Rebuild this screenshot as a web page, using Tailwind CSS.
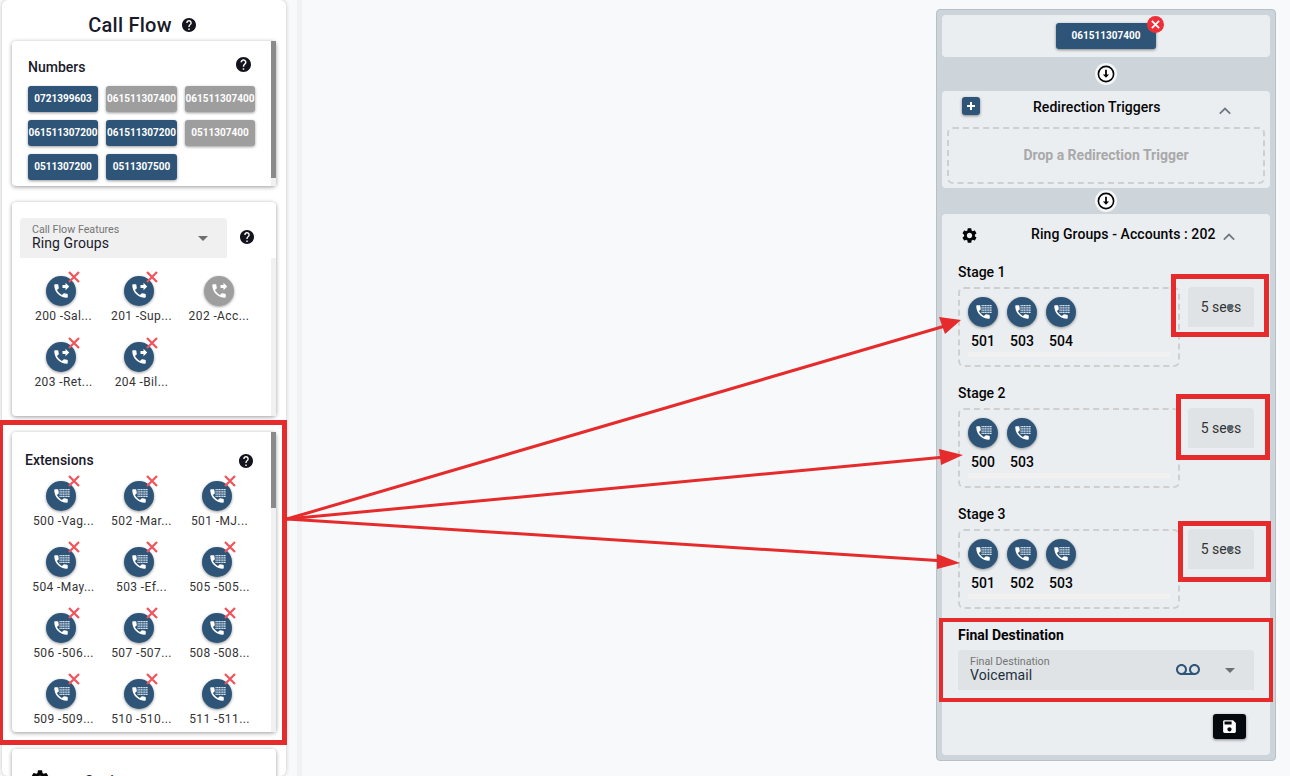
<!doctype html>
<html>
  <head>
    <title>Call Flow</title>
    <meta charset="UTF-8" />
    <script src="https://cdn.jsdelivr.net/npm/@tailwindcss/browser@4"></script>
  </head>
  <body class="bg-[#f8f9fb] font-[Roboto,sans-serif] text-[#1a1a2a]">
    <svg class="hidden">
      <symbol id="help" viewBox="2 2 20 20"><path fill="#14141e" d="M12 2C6.48 2 2 6.48 2 12s4.48 10 10 10 10-4.48 10-10S17.52 2 12 2zm1 17h-2v-2h2v2zm2.07-7.75l-.9.92C13.45 12.9 13 13.5 13 15h-2v-.5c0-1.1.45-2.1 1.17-2.83l1.24-1.26c.37-.36.59-.86.59-1.41 0-1.1-.9-2-2-2s-2 .9-2 2H8c0-2.21 1.79-4 4-4s4 1.79 4 4c0 .88-.36 1.68-.93 2.25z"/></symbol>
      <symbol id="cog" viewBox="2 2 20 20"><path fill="#050505" d="M19.14 12.94c.04-.3.06-.61.06-.94 0-.32-.02-.64-.07-.94l2.03-1.58c.18-.14.23-.41.12-.61l-1.92-3.32c-.12-.22-.37-.29-.59-.22l-2.39.96c-.5-.38-1.03-.7-1.62-.94l-.36-2.54c-.04-.24-.24-.41-.48-.41h-3.84c-.24 0-.43.17-.47.41l-.36 2.54c-.59.24-1.13.57-1.62.94l-2.39-.96c-.22-.08-.47 0-.59.22L2.74 8.87c-.12.21-.08.47.12.61l2.03 1.58c-.05.3-.09.63-.09.94s.02.64.07.94l-2.03 1.58c-.18.14-.23.41-.12.61l1.92 3.32c.12.22.37.29.59.22l2.39-.96c.5.38 1.03.7 1.62.94l.36 2.54c.05.24.24.41.48.41h3.84c.24 0 .44-.17.47-.41l.36-2.54c.59-.24 1.13-.56 1.62-.94l2.39.96c.22.08.47 0 .59-.22l1.92-3.32c.12-.22.07-.47-.12-.61l-2.01-1.58zM12 15.6c-1.98 0-3.6-1.62-3.6-3.6s1.62-3.6 3.6-3.6 3.6 1.62 3.6 3.6-1.62 3.6-3.6 3.6z"/></symbol>
      <symbol id="forward" viewBox="0 0 24 24"><path fill="#fff" d="M18 11l5-5-5-5v3h-4v4h4v3zm2 4.5c-1.25 0-2.45-.2-3.57-.57-.35-.11-.74-.03-1.02.24l-2.2 2.2c-2.83-1.44-5.15-3.75-6.59-6.59l2.2-2.21c.28-.26.36-.65.25-1C8.7 6.45 8.5 5.25 8.5 4c0-.55-.45-1-1-1H4c-.55 0-1 .45-1 1 0 9.39 7.61 17 17 17 .55 0 1-.45 1-1v-3.5c0-.55-.45-1-1-1z"/></symbol>
      <symbol id="dial" viewBox="0 0 24 24">
        <path fill="#fff" d="M20 15.5c-1.25 0-2.45-.2-3.57-.57-.35-.11-.74-.03-1.02.24l-2.2 2.2c-2.83-1.44-5.15-3.75-6.59-6.59l2.2-2.21c.28-.26.36-.65.25-1C8.7 6.45 8.5 5.25 8.5 4c0-.55-.45-1-1-1H4c-.55 0-1 .45-1 1 0 9.39 7.61 17 17 17 .55 0 1-.45 1-1v-3.5c0-.55-.45-1-1-1z"/>
        <path fill="none" stroke="#dbe6f0" stroke-width="1.9" stroke-dasharray="1.7 .5" d="M10 3.5h14M10 6.500h14M10 9.500h14M10 12.500h14"/>
      </symbol>
      <symbol id="arrow-down" viewBox="0 0 18 18"><circle cx="9" cy="9" r="7.6" fill="#fff" stroke="#050505" stroke-width="1.6"/><path fill="#050505" d="M8.1 4.8h1.8v4.6h2.2L9 12.8 5.9 9.4h2.2z"/></symbol>
      <symbol id="chevron" viewBox="0 0 12 8"><path fill="none" stroke="#6f7880" stroke-width="1.8" d="M.8 6.6 6 1.6l5.200 5"/></symbol>
    </svg>

    <div class="relative flex h-[776px] w-[1290px] overflow-hidden">
      <aside class="ml-[2px] h-full w-[284px] shrink-0 rounded-md bg-white px-[10px] shadow-[0_0_4px_rgba(0,0,0,0.2)]">
        <div class="flex h-[41px] items-center justify-center gap-[10px] pr-[4px] pt-[9px]">
          <h1 class="text-[20px] font-medium leading-none tracking-[.25px]">Call Flow</h1>
          <svg class="size-[14px]"><use href="#help" /></svg>
        </div>

        <section class="flex h-[145px] rounded-sm bg-white shadow-[0_1px_4px_rgba(0,0,0,0.4)]">
          <div class="flex-1 pl-4 pt-[15px]">
            <div class="flex items-center justify-between pr-[20px]">
              <h2 class="mt-[2px] text-sm font-medium leading-[18px]">Numbers</h2>
              <svg class="mb-[3px] size-[15px]"><use href="#help" /></svg>
            </div>
            <div id="numbers" class="mt-[10px] grid grid-cols-[70px_71px_70px] gap-x-2 gap-y-[8px]"></div>
          </div>
          <div class="w-[5px] bg-[#f1f1f1]"><div class="h-[137px] bg-[#8a8a8a]"></div></div>
        </section>

        <section class="mt-4 flex h-[214px] flex-col rounded-sm bg-white shadow-[0_1px_4px_rgba(0,0,0,0.4)]">
          <div class="flex pl-2 pt-4">
            <div class="flex h-10 w-[207px] items-center justify-between rounded-t bg-[#f0f0f0] pl-3 pr-[19px]">
              <div class="pt-[2px] leading-none">
                <div class="text-[10.7px] text-[#757575]">Call Flow Features</div>
                <div class="-mt-[2px] text-sm tracking-[.1px]">Ring Groups</div>
              </div>
              <div class="border-x-[5px] border-t-[5px] border-x-transparent border-t-[#6f6f6f]"></div>
            </div>
            <svg class="ml-[13px] mt-[12px] size-[14px]"><use href="#help" /></svg>
          </div>
          <div class="flex flex-1">
            <div id="features" class="grid flex-1 grid-cols-[78px_78px_82px] content-start gap-y-[17px] pl-[10px] pt-[18px]"></div>
            <div class="w-[5px] bg-[#f1f1f1]"></div>
          </div>
        </section>

        <section class="mt-4 flex h-[300px] rounded-sm bg-white shadow-[0_1px_4px_rgba(0,0,0,0.4)]">
          <div class="flex-1">
            <div class="flex items-center justify-between pl-[13px] pr-[18px] pt-[19px]">
              <h2 class="text-sm font-medium leading-[18px]">Extensions</h2>
              <svg class="mt-[2px] size-[14px]"><use href="#help" /></svg>
            </div>
            <div id="extensions" class="grid grid-cols-[78px_78px_78px] gap-y-[17px] pl-[10px] pt-[12px]"></div>
          </div>
          <div class="w-[5px] bg-[#f1f1f1]"><div class="h-[76px] bg-[#8a8a8a]"></div></div>
        </section>

        <section class="mt-[17px] flex h-[60px] items-start gap-9 rounded-sm bg-white pl-[19px] pt-[21px] shadow-[0_1px_4px_rgba(0,0,0,0.4)]">
          <svg class="size-[18px]"><use href="#cog" /></svg>
          <span class="mt-[1px] text-sm font-medium">Settings</span>
        </section>
      </aside>

      <div class="ml-[11px] h-full w-[5px] shrink-0 bg-[#f0f1f2]"></div>

      <main class="mb-4 ml-[634px] mt-[9px] flex h-[752px] w-[340px] flex-col rounded border border-[#b7c0c6] bg-[#ced5da] px-[5px] py-[5px]">
        <section class="flex h-[42px] items-start justify-center rounded-sm bg-[#ebeef1] pt-2">
          <div class="relative flex h-[26px] w-[100px] items-center justify-center rounded-[3px] bg-[#2e5578] pb-[1px] text-[10px] font-bold text-white shadow-[0_1px_3px_rgba(0,0,0,0.45)]">
            061511307400
            <div class="absolute -right-[8px] -top-[7px] flex size-[17px] items-center justify-center rounded-full bg-[#ee2f37]">
              <svg class="size-[9px]" viewBox="0 0 10 10"><path stroke="#fff" stroke-width="2" d="M1 1l8 8M9 1l-8 8" /></svg>
            </div>
          </div>
        </section>

        <div class="flex h-[34px] items-center justify-center">
          <div class="flex size-[22px] items-center justify-center rounded-full bg-[#f4f6f7]"><svg class="size-[18px]"><use href="#arrow-down" /></svg></div>
        </div>

        <section class="flex h-[97px] flex-col rounded-sm bg-[#ebeef1] px-[5px]">
          <div class="flex h-[36px] items-start pl-[15px] pt-[6px]">
            <div class="flex size-[18px] items-center justify-center rounded-[3px] bg-[#2e5578] shadow-[0_1px_3px_rgba(0,0,0,0.45)]">
              <svg class="size-[10px]" viewBox="0 0 10 10"><path stroke="#fff" stroke-width="2" d="M5 1v8M1 5h8" /></svg>
            </div>
            <h3 class="ml-[53px] text-sm font-medium leading-5 tracking-[.05px] text-[#050505]">Redirection Triggers</h3>
            <svg class="ml-[58px] mt-[10px] h-2 w-3"><use href="#chevron" /></svg>
          </div>
          <div class="flex h-[57px] items-center justify-center rounded-md border-2 border-dashed border-[#cfcfcf] pb-[2px] text-sm font-bold text-[#a9a9a9]">Drop a Redirection Trigger</div>
        </section>

        <div class="flex h-[26px] items-center justify-center">
          <div class="flex size-[22px] items-center justify-center rounded-full bg-[#f4f6f7]"><svg class="size-[18px]"><use href="#arrow-down" /></svg></div>
        </div>

        <section class="flex flex-1 flex-col rounded-sm bg-[#ebeef1] pl-4 pr-4">
          <div class="flex h-[48px] shrink-0 items-start pl-[4px] pt-[10px]">
            <svg class="mt-[4px] size-[15px]"><use href="#cog" /></svg>
            <h3 class="ml-[54px] text-sm font-medium leading-5 tracking-[.08px] text-[#050505]">Ring Groups - Accounts : 202</h3>
            <svg class="ml-[8px] mt-[9px] h-2 w-3"><use href="#chevron" /></svg>
          </div>
          <div id="stages" class="flex flex-col"></div>
          <h3 class="text-sm font-bold leading-5 text-[#050505]">Final Destination</h3>
          <div class="mt-[5px] flex h-10 items-center justify-between rounded-t bg-[#dfe3e6] pl-3 pr-[19px]">
            <div class="pt-[2px] leading-none">
              <div class="text-[10.7px] text-[#757575]">Final Destination</div>
              <div class="-mt-[2px] text-sm tracking-[.1px] text-[#22303c]">Voicemail</div>
            </div>
            <div class="flex items-center gap-[25px]">
              <svg class="h-6 w-6" viewBox="0 0 24 24"><path fill="#2e5578" d="M18.5 6C15.46 6 13 8.46 13 11.5c0 1.33.47 2.55 1.260 3.5H9.74c.79-.95 1.260-2.17 1.260-3.500C11 8.46 8.54 6 5.500 6S0 8.46 0 11.500 2.460 17 5.500 17h13c3.040 0 5.500-2.460 5.500-5.500S21.540 6 18.500 6zm-13 9C3.570 15 2 13.430 2 11.500S3.570 8 5.500 8 9 9.570 9 11.500 7.430 15 5.500 15zm13 0c-1.930 0-3.500-1.570-3.500-3.500S16.570 8 18.500 8 22 9.570 22 11.500 20.430 15 18.500 15z" /></svg>
              <div class="border-x-[5px] border-t-[5px] border-x-transparent border-t-[#6f6f6f]"></div>
            </div>
          </div>
          <div class="mr-2 mt-6 flex justify-end">
            <button class="flex h-[25px] w-[33px] items-center justify-center rounded-[3px] bg-[#04090d] shadow-[0_1px_3px_rgba(0,0,0,0.45)]">
              <svg class="size-[17px]" viewBox="0 0 24 24"><path fill="#fff" d="M17 3H5c-1.110 0-2 .9-2 2v14c0 1.100.890 2 2 2h14c1.100 0 2-.9 2-2V7l-4-4zm-5 16c-1.660 0-3-1.340-3-3s1.340-3 3-3 3 1.340 3 3-1.340 3-3 3zm3-10H5V5h10v4z" /></svg>
            </button>
          </div>
        </section>
      </main>

      <!-- red annotations drawn over the screenshot -->
      <div class="absolute left-0 top-[420px] h-[325px] w-[287px] border-[5px] border-l-[3px] border-[#e52b2b]"></div>
      <div class="absolute left-[1171px] top-[274px] h-[63px] w-[98px] border-[5px] border-[#e52b2b]"></div>
      <div class="absolute left-[1176px] top-[394px] h-[66px] w-[94px] border-[5px] border-[#e52b2b]"></div>
      <div class="absolute left-[1178px] top-[521px] h-[61px] w-[93px] border-[5px] border-[#e52b2b]"></div>
      <div class="absolute left-[939px] top-[618px] h-[84px] w-[334px] border-[4px] border-[#e52b2b]"></div>
      <svg class="absolute left-0 top-0" width="1290" height="776">
        <g fill="none" stroke="#e52b2b" stroke-width="3">
          <path d="M287 519 945 326" />
          <path d="M287 519 945 457" />
          <path d="M287 519 945 561" />
        </g>
        <g fill="#e52b2b">
          <path d="M961 320 939 317 945 334z" />
          <path d="M963 455 939 449 941 465z" />
          <path d="M960 563 937 554 937 569z" />
        </g>
      </svg>
    </div>

    <script>
      const numbers = [
        ['0721399603', 1], ['061511307400', 0], ['061511307400', 0],
        ['061511307200', 1], ['061511307200', 1], ['0511307400', 0],
        ['0511307200', 1], ['0511307500', 1],
      ];
      document.getElementById('numbers').innerHTML = numbers.map(([n, on]) =>
        `<div class="flex h-[26px] items-center justify-center whitespace-nowrap rounded-[3px] pb-[1px] text-[10px] font-bold text-white shadow-[0_1px_3px_rgba(0,0,0,0.4)] ${on ? 'bg-[#2e5578]' : 'bg-[#9e9e9e]'}">${n}</div>`
      ).join('');

      function tile(icon, label, on, top, labelClass) {
        return `<div class="flex flex-col items-center">
          <div class="relative size-[30px] rounded-full shadow-[0_1px_3px_rgba(0,0,0,0.4)] ${on ? 'bg-[#2e5578]' : 'bg-[#9e9e9e]'}">
            <svg class="absolute left-[6px] top-[6px] size-[18px]"><use href="#${icon}" /></svg>
            ${on ? `<svg class="absolute -right-[4px] ${top} size-[12px]" viewBox="0 0 12 12"><path stroke="#f4525a" stroke-width="2.2" d="M1 1l10 10M11 1 1 11" /></svg>` : ''}
          </div>
          <div class="mt-[1px] whitespace-nowrap text-xs leading-[18px] tracking-[.4px] text-[#333] ${labelClass}">${label}</div>
        </div>`;
      }

      document.getElementById('features').innerHTML = [
        ['200 -Sal...', 1], ['201 -Sup...', 1], ['202 -Acc...', 0], ['203 -Ret...', 1], ['204 -Bil...', 1],
      ].map(([l, on]) => tile('forward', l, on, '-top-[5px]', on ? 'ml-[5px]' : '')).join('');

      document.getElementById('extensions').innerHTML = [
        '500 -Vag...', '502 -Mar...', '501 -MJ...', '504 -May...', '503 -Ef...', '505 -505...',
        '506 -506...', '507 -507...', '508 -508...', '509 -509...', '510 -510...', '511 -511...',
      ].map((l) => tile('dial', l, 1, '-top-[6px]', 'ml-[5px]')).join('');

      const stages = [['Stage 1', ['501', '503', '504']], ['Stage 2', ['500', '503']], ['Stage 3', ['501', '502', '503']]];
      document.getElementById('stages').innerHTML = stages.map(([name, exts]) =>
        `<div class="h-[121px] shrink-0">
          <h4 class="text-sm font-medium leading-5 text-[#050505]">${name}</h4>
          <div class="mt-[5px] flex items-start justify-between">
            <div class="flex h-[80px] w-[222px] flex-col rounded-md border-2 border-dashed border-[#cfcfcf] px-[8px] pt-[8px]">
              <div class="flex gap-[9px]">${exts.map((e) =>
                `<div class="flex w-[30px] flex-col items-center">
                  <div class="relative size-[30px] rounded-full bg-[#2e5578] shadow-[0_1px_3px_rgba(0,0,0,0.4)]"><svg class="absolute left-[6px] top-[6px] size-[18px]"><use href="#dial" /></svg></div>
                  <div class="mt-[4px] text-sm font-medium leading-5 text-[#050505]">${e}</div>
                </div>`).join('')}</div>
              <div class="mt-[1px] h-[5px] bg-[#f1f1f1]"></div>
            </div>
            <div class="relative flex h-10 w-[66px] items-center justify-center rounded-t bg-[#dfe3e6] pb-[1px] text-sm text-[#333]">5 secs<span class="absolute left-[39px] top-[17px] size-[6px] rounded-full bg-[#5a6670]"></span></div>
          </div>
        </div>`
      ).join('');
    </script>
  </body>
</html>
